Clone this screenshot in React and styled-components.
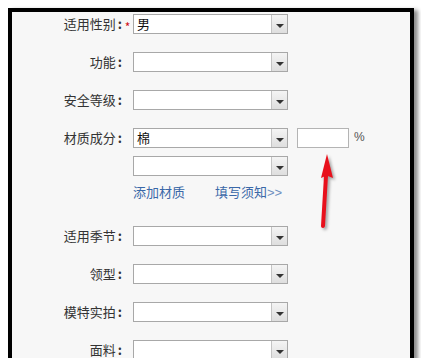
import React from "react";
import styled, { createGlobalStyle } from "styled-components";

const GlobalStyle = createGlobalStyle`
  body {
    margin: 0;
    background: #fff;
    overflow: hidden;
    font-family: "Noto Sans CJK SC", "Liberation Sans", sans-serif;
  }
`;

const Frame = styled.div`
  position: relative;
  box-sizing: border-box;
  margin: 8px 0 0 8px;
  width: 406px;
  height: 400px;
  border: 4px solid #000;
  border-bottom: none;
  background: #f7f7f7;
  box-shadow: 4px 2px 4px rgba(0, 0, 0, 0.45);
`;

const Form = styled.div`
  display: grid;
  grid-template-columns: 110px auto;
  column-gap: 11px;
  row-gap: 18px;
  padding-top: 2px;
  align-items: start;
`;

const Label = styled.div`
  text-align: right;
  font-size: 13px;
  line-height: 20px;
  color: #333;
  white-space: nowrap;
`;

const Colon = styled.span`
  margin-left: 2px;
  font-weight: bold;
`;

const Star = styled.span`
  display: inline-block;
  position: relative;
  top: 3px;
  width: 7px;
  margin-left: 2px;
  margin-right: -9px;
  color: #d0101a;
  font-size: 12px;
  line-height: 12px;
  text-align: center;
`;

const Controls = styled.div`
  display: flex;
  flex-direction: column;
  gap: 8px;
`;

const Line = styled.div`
  display: flex;
  align-items: center;
`;

const Select = styled.div`
  box-sizing: border-box;
  width: 155px;
  height: 20px;
  display: flex;
  border: 1px solid #a8a8a8;
  background: #fff;
`;

const Value = styled.div`
  flex: 1;
  padding-left: 3px;
  font-size: 13px;
  line-height: 18px;
  color: #111;
`;

const Arrow = styled.div`
  width: 16px;
  display: flex;
  justify-content: center;
  align-items: flex-end;
  padding-bottom: 5px;
  box-sizing: border-box;
  border-left: 1px solid #c4c4c4;
  background: linear-gradient(#f4f4f4, #dedede);
  &::after {
    content: "";
    border-left: 4px solid transparent;
    border-right: 4px solid transparent;
    border-top: 4px solid #333;
  }
`;

const Percent = styled.div`
  box-sizing: border-box;
  width: 52px;
  height: 20px;
  margin-left: 9px;
  border: 1px solid #b4b4b4;
  background: #fff;
`;

const Unit = styled.span`
  margin-left: 5px;
  margin-top: -2px;
  font-size: 12px;
  color: #555;
  font-family: "Liberation Sans", sans-serif;
`;

const Links = styled.div`
  display: flex;
  gap: 30px;
  padding-bottom: 7px;
  font-size: 13px;
  line-height: 16px;
  color: #3a68a8;
`;

const More = styled.span`
  color: #6d8fc0;
  font-family: "Liberation Sans", sans-serif;
`;

const Pointer = styled.svg`
  position: absolute;
  left: 304px;
  top: 138px;
  filter: drop-shadow(2px 2px 1.5px rgba(0, 0, 0, 0.35));
`;

const Dropdown = ({ value }) => (
  <Select>
    <Value>{value}</Value>
    <Arrow />
  </Select>
);

const rows = [
  { label: "适用性别", value: "男", required: true },
  { label: "功能" },
  { label: "安全等级" },
  { label: "材质成分", material: true },
  { label: "适用季节" },
  { label: "领型" },
  { label: "模特实拍" },
  { label: "面料" },
];

const App = () => {
  return (
    <>
      <GlobalStyle />
      <Frame>
        <Form>
          {rows.map((row) => (
            <React.Fragment key={row.label}>
              <Label>
                {row.label}
                <Colon>:</Colon>
                {row.required && <Star>*</Star>}
              </Label>
              {row.material ? (
                <Controls>
                  <Line>
                    <Dropdown value="棉" />
                    <Percent />
                    <Unit>%</Unit>
                  </Line>
                  <Dropdown />
                  <Links>
                    <span>添加材质</span>
                    <span>
                      填写须知<More>&gt;&gt;</More>
                    </span>
                  </Links>
                </Controls>
              ) : (
                <Dropdown value={row.value} />
              )}
            </React.Fragment>
          ))}
        </Form>
        <Pointer width="20" height="82" viewBox="0 0 20 82">
          <line x1="10" y1="26" x2="7" y2="76" stroke="#e8101c" strokeWidth="4" strokeLinecap="round" />
          <path d="M11 4 L17 28 L10.5 25.5 L5 28 Z" fill="#e8101c" />
        </Pointer>
      </Frame>
    </>
  );
};

export default App;
